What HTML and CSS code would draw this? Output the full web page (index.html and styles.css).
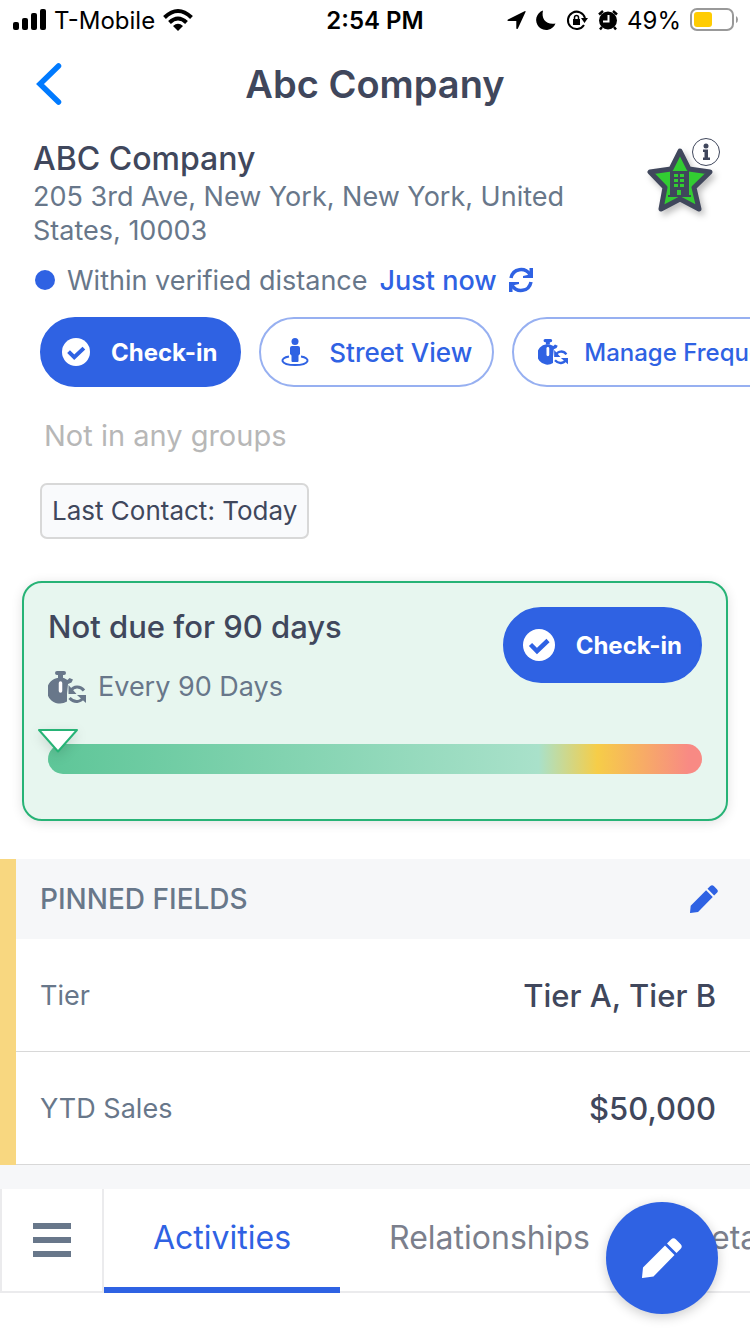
FILE: index.html
```html
<!DOCTYPE html>
<html lang="en">
<head>
  <meta charset="UTF-8" />
  <meta name="viewport" content="width=device-width, initial-scale=1" />
  <title>Abc Company</title>
  <link rel="stylesheet" href="styles.css">
</head>
<body>

  <!-- shared icons -->
  <svg class="sprite" aria-hidden="true">
    <symbol id="check" viewBox="0 0 32 32">
      <circle cx="16" cy="16" r="16" fill="#fff"/>
      <path d="M7.500 15.500l6.500 6.500L25 11.500" fill="none" stroke="#2f62e3" stroke-width="4.500"/>
    </symbol>
    <symbol id="pencil" viewBox="0 0 40 40">
      <path d="M23 7.500L32.500 17 11.500 38.500 0.500 40Q0 40 0 39.500L1 29.500zM25 5.500L29 1.500Q31.500-1 34 1.500L38.500 6Q41 8.500 38.500 11L34.500 15z" fill="currentColor"/>
    </symbol>
    <symbol id="timer" viewBox="0 0 38 33">
      <path d="M9 0h7a2 2 0 0 1 0 4h-1v3h-5V4H9a2 2 0 0 1 0-4z" fill="currentColor"/>
      <path d="M19 30.500A13 13 0 1 1 19.500 9l2-2 3.500 1.500-1.500 3-3.500 1.500-1 9.500z" fill="currentColor"/>
      <path d="M12.500 12v8" class="timer-hand" fill="none" stroke-width="3.500" stroke-linecap="round"/>
      <path d="M23 19.500c2.500-4.500 9-5 13 0M35.500 26c-2.500 5.500-9.500 6-14 1" fill="none" stroke="currentColor" stroke-width="3"/>
      <path d="M20.500 14v9h8zM38 32v-8h-9z" fill="currentColor"/>
    </symbol>
  </svg>

  <div class="status-bar">
    <div class="status-side">
      <svg width="34" height="22" viewBox="0 0 34 22"><rect x="1" y="13" width="6" height="8" rx="2"/><rect x="10" y="9" width="6" height="12" rx="2"/><rect x="19" y="4" width="6" height="17" rx="2"/><rect x="28" y="0" width="6" height="21" rx="2"/></svg>
      <span>T-Mobile</span>
      <svg width="30" height="22" viewBox="0 0 30 22"><path d="M1.500 8.500Q15-4.500 28.500 8.500M6.500 13.500Q15 5.500 23.500 13.500" fill="none" stroke="#000" stroke-width="4"/><path d="M10 17q5-4.500 10 0l-5 5z"/></svg>
    </div>
    <time class="status-time">2:54 PM</time>
    <div class="status-side status-right">
      <svg width="20" height="20" viewBox="0 0 20 20"><path d="M17.500 1.200Q19 .5 18.500 2L11 18.200Q10 20 9.300 18.200V11H1.500Q-.5 10.400 1 9.400z"/></svg>
      <svg width="22" height="20" viewBox="0 0 22 20"><path d="M7 0.500C5 9 10 15 19.500 13.500A10 10 0 1 1 7 .5z"/></svg>
      <svg width="22" height="20" viewBox="0 0 22 20"><path d="M17 15A8.700 8.700 0 1 1 18 8" fill="none" stroke="#000" stroke-width="2"/><path d="M14 8h7l-3.500 5zM6 9h7v6H6z"/><path d="M7.500 9V7.500a2 2 0 0 1 4 0V9" fill="none" stroke="#000" stroke-width="1.500"/></svg>
      <svg width="20" height="20" viewBox="0 0 20 20"><circle cx="10" cy="10.500" r="9"/><path d="M1 4.500L5 1M19 4.500L15 1M4 17l-2 2.500M16 17l2 2.500" stroke="#000" stroke-width="2.500"/><path d="M10.500 5v6.500H5" fill="none" stroke="#fff" stroke-width="2"/></svg>
      <span>49%</span>
      <svg width="48" height="24" viewBox="0 0 48 24"><rect x="1" y="1" width="42" height="21" rx="6" fill="none" stroke="#999" stroke-width="2"/><rect x="4" y="4" width="18" height="15" rx="3" fill="#ffcc02"/><path d="M46 8q2 1 2 3.500T46 15z" fill="#999"/></svg>
    </div>
  </div>

  <header class="nav">
    <button class="back" aria-label="Back">
      <svg width="26" height="42" viewBox="0 0 26 42"><path d="M22.500 3L4 21l18.500 18" fill="none" stroke="#007aff" stroke-width="5.500" stroke-linecap="round"/></svg>
    </button>
    <h1>Abc Company</h1>
  </header>

  <section class="company">
    <div class="company-text">
      <h2>ABC Company</h2>
      <address>205 3rd Ave, New York, New York, United States, 10003</address>
    </div>
    <button class="pin" aria-label="Account type">
      <svg width="80" height="84" viewBox="0 0 80 84">
        <path class="star" d="M36 13l9 18 21 3-16 15.500 5 21.500-19-10-19 10 4-21.500L6 34l21-3z" fill="#32cd32" stroke="#40475c" stroke-width="5" stroke-linejoin="round"/>
        <path d="M26 33h19v24h2v2H24v-2h2z" fill="#40475c"/>
        <path d="M30 36h4v3h-4zm6 0h4v3h-4zM30 41h4v3h-4zm6 0h4v3h-4zM30 46h4v3h-4zm6 0h4v3h-4zM33 52h4v5h-4z" fill="#32cd32"/>
        <circle cx="62" cy="14" r="13.500" fill="#fff" stroke="#40475c" stroke-width="1"/>
        <circle cx="62" cy="8" r="2.500" fill="#40475c"/>
        <path d="M59 11.500h5v8h2V22h-7v-2.500h1.500V14H59z" fill="#40475c"/>
      </svg>
    </button>
  </section>

  <div class="distance">
    <span class="dot"></span>
    <span>Within verified distance</span>
    <a href="#">Just now
      <svg width="24" height="24" viewBox="0 0 24 24"><path d="M2 10C4 0 16-1 21 6.500M22 14C20 24 8 25 3 17.500" fill="none" stroke="currentColor" stroke-width="3.500"/><path d="M24 0v10H14V8l6.500-1.500V0zM0 24V14h10v2l-6.500 1.500V24z" fill="currentColor"/></svg>
    </a>
  </div>

  <div class="actions">
    <button class="pill primary"><svg width="28" height="28"><use href="#check"/></svg>Check-in</button>
    <button class="pill">
      <svg width="28" height="28" viewBox="0 0 28 28"><circle cx="14" cy="3.500" r="3.500" fill="currentColor"/><path d="M11 8h6q2 0 2 2v6l-1.500 1.500V23q0 1-1 1h-5q-1 0-1-1v-5.500L9 16v-6q0-2 2-2z" fill="currentColor"/><path d="M8 18.500C-2 20-1 27 14 27s16-7 6-8.500" fill="none" stroke="currentColor" stroke-width="2"/></svg>
      Street View
    </button>
    <button class="pill frequency"><svg width="30" height="26"><use href="#timer"/></svg>Manage Frequency</button>
  </div>

  <p class="groups">Not in any groups</p>
  <span class="tag">Last Contact: Today</span>

  <section class="due">
    <div class="due-top">
      <div>
        <h3>Not due for 90 days</h3>
        <p class="every"><svg width="38" height="33"><use href="#timer"/></svg>Every 90 Days</p>
      </div>
      <button class="pill primary large"><svg width="32" height="32"><use href="#check"/></svg>Check-in</button>
    </div>
    <div class="progress">
      <svg class="marker" width="40" height="24" viewBox="0 0 40 24"><path d="M1 1h38L20 22.500z" fill="#fff" stroke="#27b376" stroke-width="2" stroke-linejoin="round"/></svg>
    </div>
  </section>

  <section class="pinned">
    <div class="pinned-head">
      <h4>PINNED FIELDS</h4>
      <button aria-label="Edit pinned fields"><svg width="28" height="28"><use href="#pencil"/></svg></button>
    </div>
    <dl>
      <div class="field"><dt>Tier</dt><dd>Tier A, Tier B</dd></div>
      <div class="field"><dt>YTD Sales</dt><dd>$50,000</dd></div>
    </dl>
  </section>

  <nav class="tabs">
    <button class="menu" aria-label="Menu">
      <svg width="40" height="34" viewBox="0 0 40 34"><path d="M1 3h38M1 17h38M1 31h38" stroke="#68778a" stroke-width="6"/></svg>
    </button>
    <a href="#" class="tab active">Activities</a>
    <a href="#" class="tab">Relationships</a>
    <a href="#" class="tab">Details</a>
  </nav>

  <button class="fab" aria-label="Add note"><svg width="40" height="40"><use href="#pencil"/></svg></button>

</body>
</html>
```
FILE: styles.css
```css
* { box-sizing: border-box; margin: 0; padding: 0; }

body {
  font-family: Inter, "Liberation Sans", sans-serif;
  background: #fff;
  color: #40475c;
  min-height: 100vh;
  overflow: hidden;
}

button {
  font-family: inherit;
  background: none;
  border: none;
  cursor: pointer;
}

a {
  color: #2f62e3;
  text-decoration: none;
}

svg {
  display: block;
  flex-shrink: 0;
  overflow: visible;
}

.sprite {
  position: absolute;
  width: 0;
  height: 0;
}

/* status bar */
.status-bar {
  display: flex;
  align-items: center;
  height: 40px;
  padding: 0 12px;
  color: #000;
  font-size: 24px;
}

.status-side {
  display: flex;
  flex: 1;
  align-items: center;
  gap: 8px;
}

.status-right {
  justify-content: flex-end;
  gap: 9px;
}

.status-time {
  font-weight: 600;
}

/* title */
.nav {
  display: grid;
  grid-template-columns: 64px 1fr 64px;
  align-items: center;
  height: 88px;
  padding: 0 36px;
}

.nav h1 {
  font-size: 38px;
  font-weight: 600;
  text-align: center;
}

/* company */
.company {
  display: flex;
  justify-content: space-between;
  padding: 10px 26px 0 33px;
}

.company-text {
  max-width: 550px;
}

.company h2 {
  font-size: 32px;
  font-weight: 500;
  line-height: 42px;
}

.company address {
  color: #68778a;
  font-size: 27px;
  font-style: normal;
  line-height: 34px;
}

.pin {
  align-self: flex-start;
}

.star {
  filter: drop-shadow(3px 4px 3px rgba(0, 0, 0, 0.25));
}

.distance {
  display: flex;
  align-items: center;
  gap: 12px;
  height: 34px;
  margin-top: 15px;
  padding-left: 35px;
  color: #68778a;
  font-size: 27px;
}

.distance a {
  display: flex;
  align-items: center;
  gap: 12px;
  font-weight: 500;
}

.dot {
  width: 20px;
  height: 20px;
  border-radius: 50%;
  background: #2f62e3;
}

/* action buttons */
.actions {
  display: flex;
  gap: 18px;
  margin-top: 20px;
  padding-left: 40px;
  overflow: hidden;
}

.pill {
  display: flex;
  flex-shrink: 0;
  align-items: center;
  gap: 20px;
  height: 70px;
  padding: 0 20px;
  border: 2px solid #97b0f1;
  border-radius: 38px;
  color: #2f62e3;
  font-size: 26px;
  font-weight: 500;
  white-space: nowrap;
}

.pill.frequency {
  gap: 16px;
  padding: 0 24px;
  font-size: 24px;
}

.pill.primary {
  gap: 21px;
  padding-right: 22px;
  border-color: #2f62e3;
  background: #2f62e3;
  color: #fff;
  font-size: 24px;
  font-weight: 700;
}

.pill.large {
  height: 76px;
  padding: 0 18px;
}

.groups {
  margin: 31px 44px 0;
  color: #b7b7b7;
  font-size: 29px;
  line-height: 36px;
}

.tag {
  display: inline-block;
  margin: 29px 40px 0;
  padding: 0 10px;
  border: 2px solid #d8d8d8;
  border-radius: 7px;
  background: #f9fafc;
  font-size: 26px;
  line-height: 52px;
}

/* due card */
.due {
  min-height: 240px;
  margin: 42px 22px 0;
  padding: 24px;
  border: 2px solid #27b376;
  border-radius: 20px;
  background: #e7f6ef;
  box-shadow: 0 2px 12px rgba(0, 0, 0, 0.12);
}

.due-top {
  display: flex;
  justify-content: space-between;
}

.due h3 {
  font-size: 31px;
  font-weight: 500;
  line-height: 40px;
}

.every {
  display: flex;
  align-items: center;
  gap: 12px;
  margin-top: 20px;
  color: #68778a;
  font-size: 27px;
  line-height: 40px;
}

.timer-hand {
  stroke: #fff;
}

.progress {
  position: relative;
  height: 30px;
  margin-top: 37px;
  border-radius: 15px;
  background: linear-gradient(90deg, #5ec698, #a9e1ca 75%, #f6cd48 84%, #f88a84 98%);
}

.marker {
  position: absolute;
  top: -15px;
  left: -10px;
  filter: drop-shadow(0 4px 6px rgba(0, 0, 0, 0.12));
}

/* pinned fields */
.pinned {
  margin-top: 38px;
  border-left: 16px solid #f8d780;
}

.pinned-head {
  display: flex;
  align-items: center;
  justify-content: space-between;
  height: 80px;
  padding: 0 32px 0 24px;
  background: #f6f7f9;
  color: #2f62e3;
}

.pinned-head button {
  color: inherit;
}

.pinned h4 {
  color: #68778a;
  font-size: 28px;
  font-weight: 500;
}

.field {
  display: flex;
  align-items: center;
  justify-content: space-between;
  height: 113px;
  padding: 0 34px 0 24px;
  border-bottom: 1px solid #d8d8d8;
}

.field dt {
  color: #68778a;
  font-size: 27px;
}

.field dd {
  font-size: 31px;
  font-weight: 500;
}

/* tabs */
.tabs {
  display: flex;
  height: 128px;
  border-top: 24px solid #f6f7f9;
  overflow: hidden;
}

.menu {
  display: flex;
  flex: 0 0 104px;
  align-items: center;
  justify-content: center;
  border: 2px solid #ebebed;
  border-top: none;
}

.tab {
  flex-shrink: 0;
  padding: 0 49px;
  border-bottom: 2px solid #ebebed;
  color: #7b7f8c;
  font-size: 32px;
  line-height: 98px;
}

.tab.active {
  border-bottom: 6px solid #2f62e3;
  color: #2f62e3;
}

.fab {
  position: fixed;
  right: 32px;
  bottom: 20px;
  display: flex;
  align-items: center;
  justify-content: center;
  width: 112px;
  height: 112px;
  border-radius: 50%;
  background: #2f62e3;
  color: #fff;
  box-shadow: 0 3px 12px rgba(0, 0, 0, 0.2);
}
```
